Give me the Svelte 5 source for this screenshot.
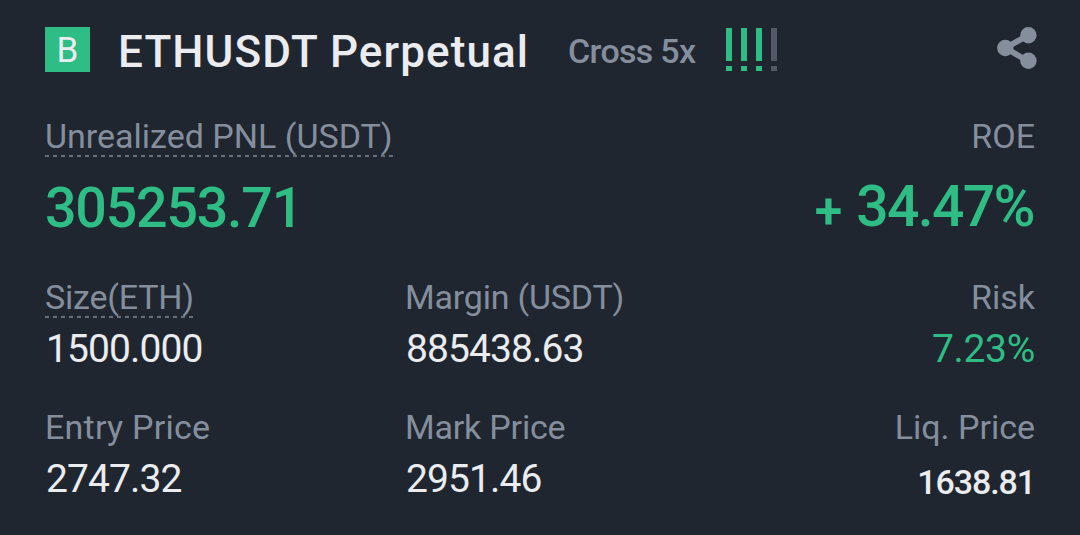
<script lang="ts">
  type Stat = {
    key: string;
    label: string;
    value: string;
    sign?: string;
    hint?: boolean;
  };

  const symbol = 'ETHUSDT Perpetual';
  const side = 'B';
  const leverage = 'Cross 5x';
  const adlLevel = 3;

  const summary: Stat[] = [
    { key: 'pnl', label: 'Unrealized PNL (USDT)', value: '305253.71', hint: true },
    { key: 'roe', label: 'ROE', sign: '+', value: '34.47%' },
  ];

  const details: Stat[] = [
    { key: 'size', label: 'Size(ETH)', value: '1500.000', hint: true },
    { key: 'margin', label: 'Margin (USDT)', value: '885438.63' },
    { key: 'risk', label: 'Risk', value: '7.23%' },
    { key: 'entry', label: 'Entry Price', value: '2747.32' },
    { key: 'mark', label: 'Mark Price', value: '2951.46' },
    { key: 'liq', label: 'Liq. Price', value: '1638.81' },
  ];
</script>

{#snippet cell(stat: Stat)}
  <div class="stat {stat.key}">
    <span class="label" class:hint={stat.hint}>{stat.label}</span>
    <span class="value">
      {#if stat.sign}<span class="sign">{stat.sign}</span>{/if}
      {stat.value}
    </span>
  </div>
{/snippet}

<div class="position">
  <header>
    <span class="side">{side}</span>
    <h1>{symbol}</h1>
    <span class="leverage">{leverage}</span>
    <div class="adl">
      {#each [1, 2, 3, 4] as level}
        <span class="adl-bar" class:on={level <= adlLevel}></span>
      {/each}
    </div>
    <svg class="share" viewBox="0 0 40 42" width="40" height="42">
      <path d="M31.5 8 8.5 21l23 13.5" fill="none" stroke="currentColor" stroke-width="5.8" />
      <circle cx="8.3" cy="21" r="8.2" fill="currentColor" />
      <circle cx="31.4" cy="8.2" r="8.2" fill="currentColor" />
      <circle cx="31.4" cy="33.8" r="8.2" fill="currentColor" />
    </svg>
  </header>

  <section class="summary">
    {#each summary as stat}
      {@render cell(stat)}
    {/each}
  </section>

  <section class="details">
    {#each details as stat}
      {@render cell(stat)}
    {/each}
  </section>
</div>

<style>
  :global(body) {
    background: #202630;
  }

  .position {
    box-sizing: border-box;
    width: 1080px;
    height: 535px;
    padding: 0 45px;
    overflow: hidden;
    background: #202630;
    color: #eaecef;
    font-family: Roboto, sans-serif;
  }

  header {
    display: flex;
    align-items: center;
    height: 99px;
    margin-bottom: 18px;
    white-space: nowrap;
  }

  .side {
    width: 45px;
    height: 45px;
    background: #2ebd85;
    font-size: 35px;
    line-height: 47px;
    text-align: center;
  }

  h1 {
    width: 421px;
    margin: 4px 0 0 28px;
    font-size: 44px;
    font-weight: 500;
    letter-spacing: 1.1px;
    line-height: 50px;
  }

  .leverage {
    width: 158px;
    margin: 3px 0 0 29px;
    color: #848e9c;
    font-size: 34px;
    font-weight: 500;
    letter-spacing: -0.7px;
    line-height: 40px;
  }

  .adl {
    display: flex;
    gap: 9px;
  }

  .adl-bar {
    width: 6px;
    height: 43px;
    background: linear-gradient(#535a67 0 33px, transparent 33px 38px, #535a67 38px);
  }

  .adl-bar.on {
    background: linear-gradient(#2ebd85 0 33px, transparent 33px 38px, #2ebd85 38px);
  }

  .share {
    margin: 0 -2px 3px auto;
    color: #848e9c;
  }

  .summary {
    display: flex;
    justify-content: space-between;
    height: 161px;
  }

  .details {
    display: grid;
    grid-template-columns: 360px 360px 270px;
    grid-auto-rows: 130px;
  }

  .stat {
    display: flex;
    flex-direction: column;
    align-items: flex-start;
    white-space: nowrap;
  }

  .roe,
  .risk,
  .liq {
    align-items: flex-end;
  }

  .label {
    height: 40px;
    color: #848e9c;
    font-size: 34px;
    line-height: 38px;
  }

  .hint {
    background: repeating-linear-gradient(90deg, #656e7b 0 4px, transparent 4px 8px) 0 100% / 100% 2px no-repeat;
  }

  .size .label,
  .margin .label,
  .mark .label {
    letter-spacing: -0.2px;
  }

  .entry .label {
    letter-spacing: 0.25px;
  }

  .value {
    margin-top: 11px;
    font-size: 39px;
    letter-spacing: -0.9px;
    line-height: 40px;
  }

  .details .value {
    padding-left: 1px;
  }

  .summary .value {
    margin-top: 22px;
    color: #2ebd85;
    font-size: 55.5px;
    font-weight: 500;
    letter-spacing: -1.2px;
    line-height: 60px;
  }

  .summary .roe .value {
    margin-top: 20px;
    margin-right: 1px;
    font-size: 57px;
    letter-spacing: -1.6px;
  }

  .sign {
    position: relative;
    top: 2px;
    margin-right: 3px;
    font-size: 50px;
    font-weight: 600;
  }

  .risk .value {
    color: #2ebd85;
    letter-spacing: -0.3px;
  }

  .liq .value {
    margin-top: 14px;
    font-size: 34px;
    font-weight: 500;
    letter-spacing: -1.1px;
  }
</style>
